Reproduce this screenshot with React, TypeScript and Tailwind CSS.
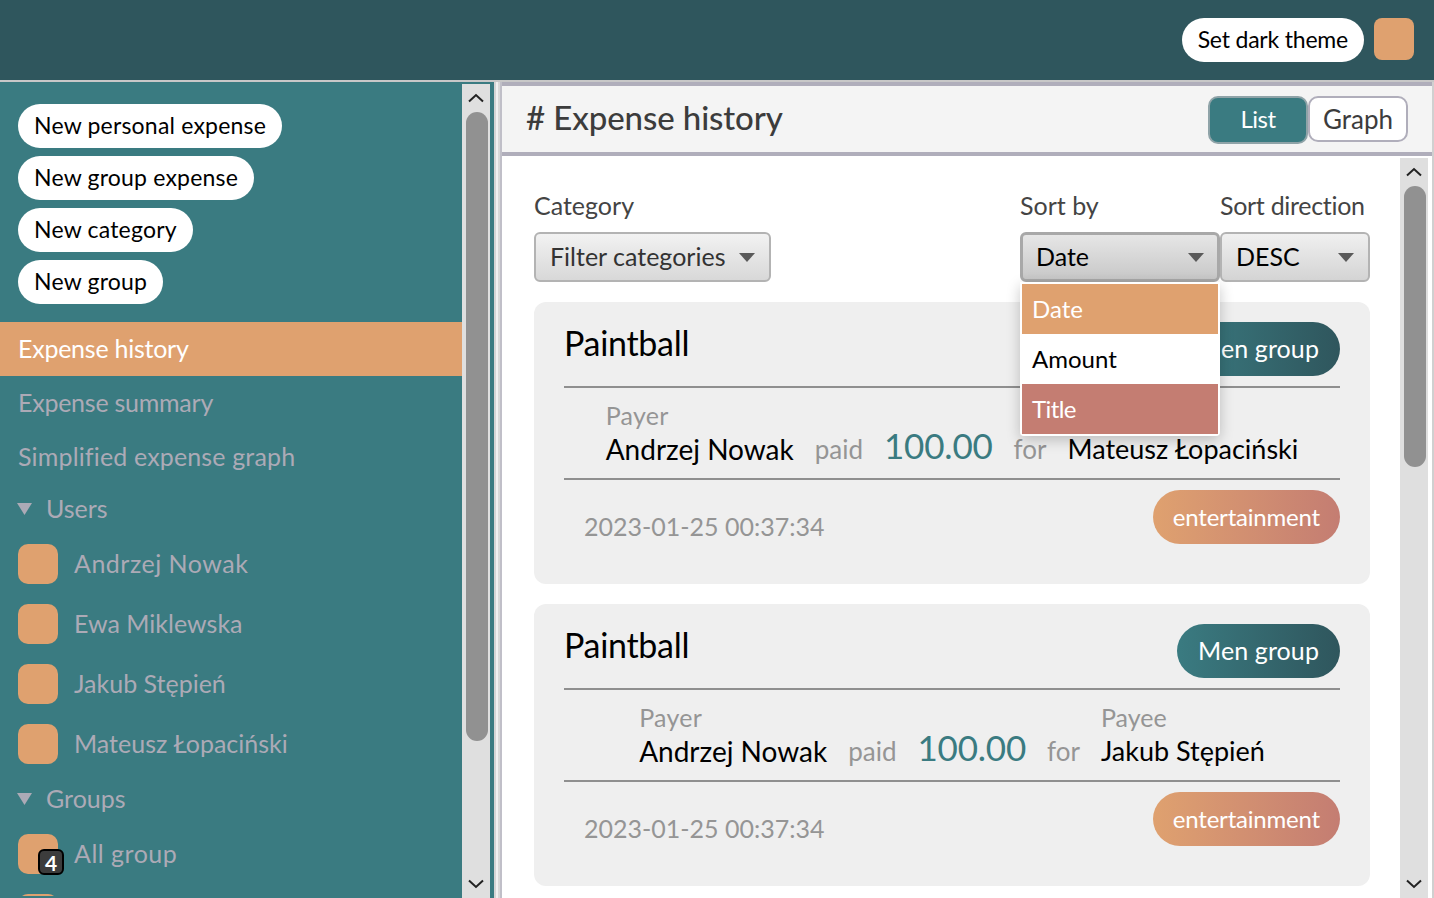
function Chevron({ down }: { down?: boolean }) {
  return (
    <svg width="16" height="10" viewBox="0 0 16 10" fill="none" stroke="#222" strokeWidth="2" className="shrink-0">
      <path d={down ? "M1 1.5 L8 8 L15 1.5" : "M1 8.5 L8 2 L15 8.5"} />
    </svg>
  );
}

function Scrollbar({ thumb }: { thumb: string }) {
  return (
    <div className="w-[28px] shrink-0 bg-[#dfdfdf] flex flex-col h-full overflow-hidden">
      <div className="h-[28px] shrink-0 flex items-center justify-center pr-[1px]">
        <Chevron />
      </div>
      <div className="flex-1 pl-[4px] pr-[2px]">
        <div className={"w-[22px] rounded-full bg-[#919191] " + thumb}></div>
      </div>
      <div className="h-[28px] shrink-0 flex items-center justify-center pr-[1px]">
        <Chevron down />
      </div>
    </div>
  );
}

function Arrow() {
  return (
    <svg width="16" height="9" viewBox="0 0 16 9" className="shrink-0">
      <polygon points="0,0 16,0 8,9" fill="#5a5a5a" />
    </svg>
  );
}

function Pill({ text }: { text: string }) {
  return (
    <button className="h-[44px] pl-[16px] pr-[16px] rounded-full bg-white text-black text-[23px] tracking-[0.2px] leading-none w-fit pb-[2px]">
      {text}
    </button>
  );
}

function Person({ name, badge, wide }: { name?: string; badge?: string; wide?: boolean }) {
  return (
    <div className="h-[60px] flex items-center pl-[18px] gap-[16px] text-[25px] text-[#acaab6]">
      <div className="relative w-[40px] h-[40px] rounded-[10px] bg-[#dfa16f] shrink-0">
        {badge && (
          <span className="absolute left-[20px] top-[15px] w-[26px] h-[26px] rounded-[6px] bg-[#3c3c3c] border-[2px] border-black text-white font-bold text-[21px] leading-none flex items-center justify-center">
            {badge}
          </span>
        )}
      </div>
      {name && <span className={wide ? "tracking-[0.5px]" : ""}>{name}</span>}
    </div>
  );
}

function Section({ text }: { text: string }) {
  return (
    <div className="h-[50px] flex items-center pl-[17px] gap-[14px] text-[25px] text-[#acaab6]">
      <svg width="15" height="12" viewBox="0 0 15 12" className="shrink-0">
        <polygon points="0,0 15,0 7.5,12" fill="#acaab6" />
      </svg>
      <span>{text}</span>
    </div>
  );
}

function ExpenseCard({ group, payee }: { group: string; payee: string }) {
  return (
    <div className="h-[282px] shrink-0 rounded-[12px] bg-[#efefef] px-[30px] pt-[20px]">
      <div className="h-[66px] flex justify-between items-start border-b-2 border-[#8f8f8f]">
        <h3 className="text-[34px] tracking-[-0.3px] leading-[42px] text-black">Paintball</h3>
        <span className="h-[54px] px-[21px] rounded-full bg-linear-to-r from-[#3a7b81] to-[#2f565d] text-white text-[25px] tracking-[0.1px] flex items-center">
          {group}
        </span>
      </div>
      <div className="h-[92px] flex justify-center items-end gap-[21px] border-b-2 border-[#8f8f8f] pb-[10px]">
        <div className="flex flex-col">
          <span className="text-[25px] tracking-[0.3px] leading-[30px] text-[#959595]">Payer</span>
          <span className="text-[28px] leading-[38px] text-black">Andrzej Nowak</span>
        </div>
        <span className="text-[26px] leading-[38px] text-[#959595]">paid</span>
        <span className="text-[35px] tracking-[-0.2px] leading-[46px] text-[#3a7b81]">100.00</span>
        <span className="text-[26px] leading-[38px] text-[#959595]">for</span>
        <div className="flex flex-col">
          <span className="text-[25px] leading-[30px] text-[#959595]">Payee</span>
          <span className="text-[27px] leading-[38px] text-black">{payee}</span>
        </div>
      </div>
      <div className="flex justify-between items-start pt-[10px]">
        <span className="pl-[20px] pt-[19px] text-[25px] leading-[34px] text-[#959595]">2023-01-25 00:37:34</span>
        <span className="h-[54px] px-[20px] rounded-full bg-linear-to-r from-[#dfa16f] to-[#c47d72] text-white text-[24px] tracking-[-0.2px] flex items-center">
          entertainment
        </span>
      </div>
    </div>
  );
}

export default function App() {
  return (
    <div className="h-screen overflow-hidden flex flex-col bg-white font-['Lato',sans-serif]">
      <header className="h-[82px] shrink-0 bg-[#2f565d] border-b-2 border-[#c8c8c8] flex justify-end items-start pt-[18px] pr-[20px] gap-[10px]">
        <button className="h-[44px] px-[16px] rounded-full bg-white text-black text-[23px] tracking-[-0.2px] leading-none pb-[2px]">Set dark theme</button>
        <div className="w-[40px] h-[42px] rounded-[8px] bg-[#dfa16f]"></div>
      </header>

      <div className="flex-1 min-h-0 flex">
        <aside className="w-[494px] shrink-0 flex bg-[#3a7b81] pr-[4px] pt-[2px]">
          <div className="flex-1 min-w-0 h-full -mt-[2px] overflow-hidden">
            <div className="flex flex-col gap-[8px] pl-[18px] pt-[22px]">
              <Pill text="New personal expense" />
              <Pill text="New group expense" />
              <Pill text="New category" />
              <Pill text="New group" />
            </div>
            <nav className="mt-[18px] text-[25px]">
              <div className="h-[54px] flex items-center pl-[18px] bg-[#dfa16f] text-white tracking-[-0.25px]">Expense history</div>
              <div className="h-[54px] flex items-center pl-[18px] text-[#acaab6] tracking-[-0.25px]">Expense summary</div>
              <div className="h-[54px] flex items-center pl-[18px] text-[#acaab6] tracking-[0.15px]">Simplified expense graph</div>
            </nav>
            <Section text="Users" />
            <Person name="Andrzej Nowak" wide />
            <Person name="Ewa Miklewska" />
            <Person name="Jakub Stępień" />
            <Person name="Mateusz Łopaciński" />
            <Section text="Groups" />
            <Person name="All group" badge="4" wide />
            <Person />
          </div>
          <Scrollbar thumb="h-[629px]" />
        </aside>

        <div className="w-[8px] shrink-0 flex">
          <div className="w-[2px] bg-[#d4d4d4]"></div>
          <div className="w-[2px] bg-[#f0f0f0]"></div>
          <div className="w-[2px] bg-[#d8d8d8]"></div>
          <div className="w-[2px] bg-[#c0bfc8]"></div>
        </div>

        <main className="flex-1 min-w-0 flex flex-col border-r-2 border-[#d0d0d0]">
          <div className="h-[74px] shrink-0 bg-[#f4f4f4] border-y-4 border-[#b0aebb] flex items-center justify-between pl-[24px] pr-[24px]">
            <h1 className="text-[33px] tracking-[-0.1px] text-[#3c3c3c] font-medium pb-[2px]">
              # Expense history
            </h1>
            <div className="flex items-start pt-[2px]">
              <button className="w-[100px] h-[48px] rounded-[10px] bg-[#3a7b81] border-2 border-[#8fa3a8] text-white text-[24px] tracking-[-0.5px] pb-[2px]">List</button>
              <button className="w-[100px] h-[46px] rounded-[10px] bg-white border-2 border-[#b0aebb] text-[#3c3c3c] text-[26px]">Graph</button>
            </div>
          </div>

          <div className="flex-1 min-h-0 flex">
            <div className="flex-1 min-w-0 overflow-hidden pl-[32px] pr-[30px] pt-[32px] flex flex-col">
              <div className="relative shrink-0 flex items-start justify-between">
                <div className="w-[237px]">
                  <div className="text-[25px] leading-[34px] text-[#444444] mb-[10px]">Category</div>
                  <div className="h-[50px] rounded-[6px] border-2 border-[#b3b3b3] bg-linear-to-b from-[#f2f2f2] to-[#d8d8d8] flex items-center justify-between pl-[14px] pr-[14px] text-[25px] text-[#333333]">
                    <span>Filter categories</span>
                    <Arrow />
                  </div>
                </div>
                <div className="flex">
                  <div className="relative w-[200px]">
                    <div className="text-[25px] leading-[34px] text-[#444444] mb-[10px]">Sort by</div>
                    <div className="h-[50px] rounded-[6px] border-[3px] border-[#a8a8a8] bg-linear-to-b from-[#e6e6e6] to-[#c8c8c8] flex items-center justify-between pl-[13px] pr-[13px] text-[25px] text-black">
                      <span>Date</span>
                      <Arrow />
                    </div>
                    <div className="absolute z-10 left-0 top-[94px] w-[200px] bg-white p-[2px] rounded-b-[4px] shadow-[0_4px_14px_rgba(0,0,0,0.22)] text-[24px]">
                      <div className="h-[50px] pl-[10px] flex items-center bg-[#dfa16f] text-white">Date</div>
                      <div className="h-[50px] pl-[10px] flex items-center bg-white text-black">Amount</div>
                      <div className="h-[50px] pl-[10px] flex items-center bg-[#c47d72] text-white tracking-[-0.6px]">Title</div>
                    </div>
                  </div>
                  <div className="w-[150px]">
                    <div className="text-[25px] tracking-[-0.3px] leading-[34px] text-[#444444] mb-[10px] whitespace-nowrap">Sort direction</div>
                    <div className="h-[50px] rounded-[6px] border-2 border-[#b3b3b3] bg-linear-to-b from-[#f0f0f0] to-[#d4d4d4] flex items-center justify-between pl-[14px] pr-[14px] text-[25px] text-black">
                      <span>DESC</span>
                      <Arrow />
                    </div>
                  </div>
                </div>
              </div>

              <div className="mt-[20px] flex flex-col gap-[20px]">
                <ExpenseCard group="Men group" payee="Mateusz Łopaciński" />
                <ExpenseCard group="Men group" payee="Jakub Stępień" />
              </div>
            </div>
            <div className="pt-[2px] h-full">
              <Scrollbar thumb="h-[281px]" />
            </div>
            <div className="w-[4px] shrink-0"></div>
          </div>
        </main>
      </div>
    </div>
  );
}
